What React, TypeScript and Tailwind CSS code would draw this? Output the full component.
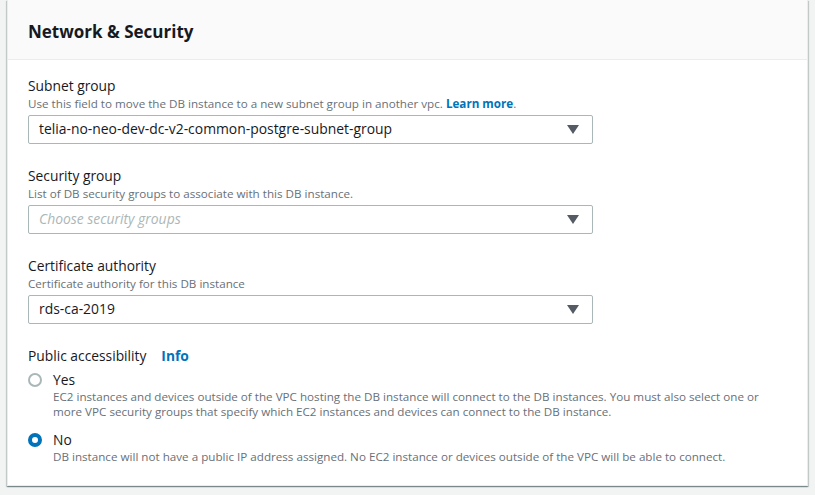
import React from "react";

const font = { fontFamily: '"Open Sans", "Noto Sans", Arial, sans-serif' };

function Caret() {
  return (
    <svg width="12" height="9" viewBox="0 0 12 9" className="shrink-0">
      <path d="M0 0 H12 L6 9 Z" fill="#545b64" />
    </svg>
  );
}

function Select({ value, placeholder }: { value?: string; placeholder?: string }) {
  return (
    <div className="flex h-[29px] w-[565px] items-center justify-between rounded-[2px] border border-[#aab7b8] bg-white pl-[10px] pr-[13px]">
      {value ? (
        <span className="text-[13.9px] text-[#16191f]">{value}</span>
      ) : (
        <span className="text-[13.9px] italic text-[#aab7b8]">{placeholder}</span>
      )}
      <Caret />
    </div>
  );
}

function Field({
  label,
  description,
  children,
}: {
  label: string;
  description: React.ReactNode;
  children: React.ReactNode;
}) {
  return (
    <div>
      <div className="text-[13.8px] leading-[20px] text-[#16191f]">{label}</div>
      <div className="mb-[3px] text-[11.65px] leading-[16px] text-[#687078]">{description}</div>
      {children}
    </div>
  );
}

function Radio({
  checked,
  label,
  children,
}: {
  checked?: boolean;
  label: string;
  children: React.ReactNode;
}) {
  return (
    <div className="flex gap-[11px]">
      <div className="pt-[3px]">
        {checked ? (
          <div className="h-[14px] w-[14px] rounded-full border-[4px] border-[#0073bb] bg-white" />
        ) : (
          <div className="h-[14px] w-[14px] rounded-full border-2 border-[#aab7b8] bg-white" />
        )}
      </div>
      <div>
        <div className="text-[13.8px] leading-[19px] text-[#16191f]">{label}</div>
        <div className="text-[11.65px] leading-[15px] text-[#687078]">{children}</div>
      </div>
    </div>
  );
}

export default function App() {
  return (
    <div className="h-[495px] w-[815px] overflow-hidden bg-[#f2f3f3]" style={font}>
      <div className="mx-[7px] w-[801px] border border-t-0 border-[#eaeded] bg-white shadow-[0_1px_1px_0_rgba(0,28,36,0.3),1px_1px_1px_0_rgba(0,28,36,0.15),-1px_1px_1px_0_rgba(0,28,36,0.15)]">
        <div className="flex h-[60px] items-center border-b border-[#eaeded] bg-[#fafafa] px-[20px] pt-[4px]">
          <h2 className="text-[17px] font-bold text-[#16191f]">Network &amp; Security</h2>
        </div>
        <div className="flex flex-col gap-[22px] px-[20px] pb-[21px] pt-[16px]">
          <Field
            label="Subnet group"
            description={
              <>
                Use this field to move the DB instance to a new subnet group in another vpc.{" "}
                <span className="font-bold text-[#0073bb]">Learn more</span>.
              </>
            }
          >
            <Select value="telia-no-neo-dev-dc-v2-common-postgre-subnet-group" />
          </Field>
          <Field
            label="Security group"
            description="List of DB security groups to associate with this DB instance."
          >
            <Select placeholder="Choose security groups" />
          </Field>
          <Field label="Certificate authority" description="Certificate authority for this DB instance">
            <Select value="rds-ca-2019" />
          </Field>
          <div>
            <div className="mb-[4px] flex items-center gap-[15px] text-[13.8px] leading-[20px]">
              <span className="text-[#16191f]">Public accessibility</span>
              <span className="font-bold text-[#0073bb]">Info</span>
            </div>
            <div className="flex flex-col gap-[11px]">
              <Radio label="Yes">
                EC2 instances and devices outside of the VPC hosting the DB instance will connect to the DB instances. You must also select one or
                <br />
                more VPC security groups that specify which EC2 instances and devices can connect to the DB instance.
              </Radio>
              <Radio checked label="No">
                DB instance will not have a public IP address assigned. No EC2 instance or devices outside of the VPC will be able to connect.
              </Radio>
            </div>
          </div>
        </div>
      </div>
    </div>
  );
}
